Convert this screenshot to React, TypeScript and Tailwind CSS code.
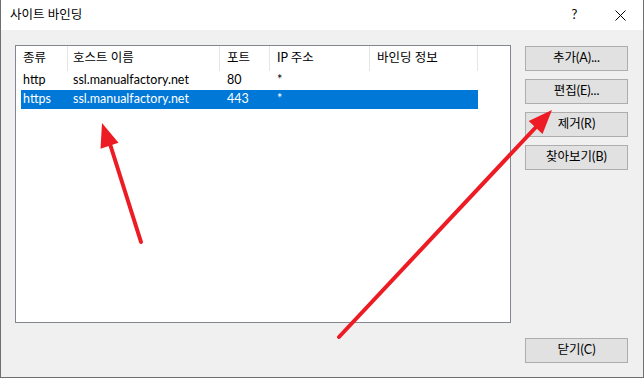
import React from "react";

type Binding = {
  type: string;
  host: string;
  port: string;
  ip: string;
  info: string;
};

const bindings: Binding[] = [
  { type: "http", host: "ssl.manualfactory.net", port: "80", ip: "*", info: "" },
  { type: "https", host: "ssl.manualfactory.net", port: "443", ip: "*", info: "" },
];

const font = { fontFamily: '"Lato", "Noto Sans CJK KR", sans-serif' };

function DlgButton({ label, className = "" }: { label: string; className?: string }) {
  return (
    <button
      className={`h-[25px] w-[103px] border border-[#adadad] bg-[#e1e1e1] text-[12.5px] leading-none text-black ${className}`}
    >
      {label}
    </button>
  );
}

export default function App() {
  return (
    <div className="relative h-[378px] w-[644px] overflow-hidden bg-[#f0f0f0]" style={font}>
      <div className="flex h-full w-full flex-col border-x border-b border-[#6f6f6f]">
        {/* Title bar */}
        <div className="flex h-[30px] shrink-0 items-center bg-white">
          <span className="pl-[9px] text-[12.5px] text-black">사이트 바인딩</span>
          <div className="ml-auto flex h-full">
            <div className="flex w-[45px] items-center justify-center text-[13px] text-black">?</div>
            <div className="flex w-[46px] items-center justify-center">
              <svg width="11" height="11" viewBox="0 0 11 11">
                <path d="M0.5 0.5L10.5 10.5M10.5 0.5L0.5 10.5" stroke="#000" strokeWidth="1" />
              </svg>
            </div>
          </div>
        </div>

        {/* Client area */}
        <div className="flex flex-1 flex-col pl-[14px] pr-[15px] pt-[15px]">
          <div className="flex gap-[14px]">
            {/* List view */}
            <div className="h-[278px] w-[496px] border border-[#828790] bg-white">
              <div className="flex h-[25px] text-[12.5px] text-black">
                <div className="flex w-[52px] items-center border-r border-[#e5e5e5] pl-[7px]">종류</div>
                <div className="flex w-[152px] items-center border-r border-[#e5e5e5] pl-[5px]">호스트 이름</div>
                <div className="flex w-[50px] items-center border-r border-[#e5e5e5] pl-[7px]">포트</div>
                <div className="flex w-[100px] items-center border-r border-[#e5e5e5] pl-[7px]">IP 주소</div>
                <div className="flex w-[108px] items-center border-r border-[#e5e5e5] pl-[7px]">바인딩 정보</div>
              </div>
              {bindings.map((b, i) => (
                <div
                  key={b.type}
                  className={`ml-[5px] flex h-[19px] w-[457px] items-center text-[12.5px] ${
                    i === 1 ? "bg-[#0078d7] text-white" : "text-black"
                  }`}
                >
                  <div className="w-[47px] pl-[2px]">{b.type}</div>
                  <div className="w-[152px] pl-[5px]">{b.host}</div>
                  <div className="w-[50px] pl-[7px]">{b.port}</div>
                  <div className="w-[100px] pl-[7px]">{b.ip}</div>
                  <div className="w-[108px] pl-[7px]">{b.info}</div>
                </div>
              ))}
            </div>

            {/* Buttons */}
            <div className="flex flex-col gap-[8px] pt-px">
              <DlgButton label="추가(A)..." />
              <DlgButton label="편집(E)..." />
              <DlgButton label="제거(R)" />
              <DlgButton label="찾아보기(B)" />
            </div>
          </div>
          <div className="mt-[15px] flex justify-end">
            <DlgButton label="닫기(C)" />
          </div>
        </div>
      </div>

      {/* Red annotation arrows */}
      <svg className="pointer-events-none absolute inset-0" width="644" height="378" viewBox="0 0 644 378">
        <line x1="141" y1="242" x2="110" y2="144" stroke="#ed1c24" strokeWidth="4" strokeLinecap="round" />
        <polygon points="102,123 118.5,142.8 100.5,148.8" fill="#ed1c24" />
        <line x1="339" y1="337" x2="537" y2="126" stroke="#ed1c24" strokeWidth="4" strokeLinecap="round" />
        <polygon points="552,110 542.5,134 528.7,121" fill="#ed1c24" />
      </svg>
    </div>
  );
}
